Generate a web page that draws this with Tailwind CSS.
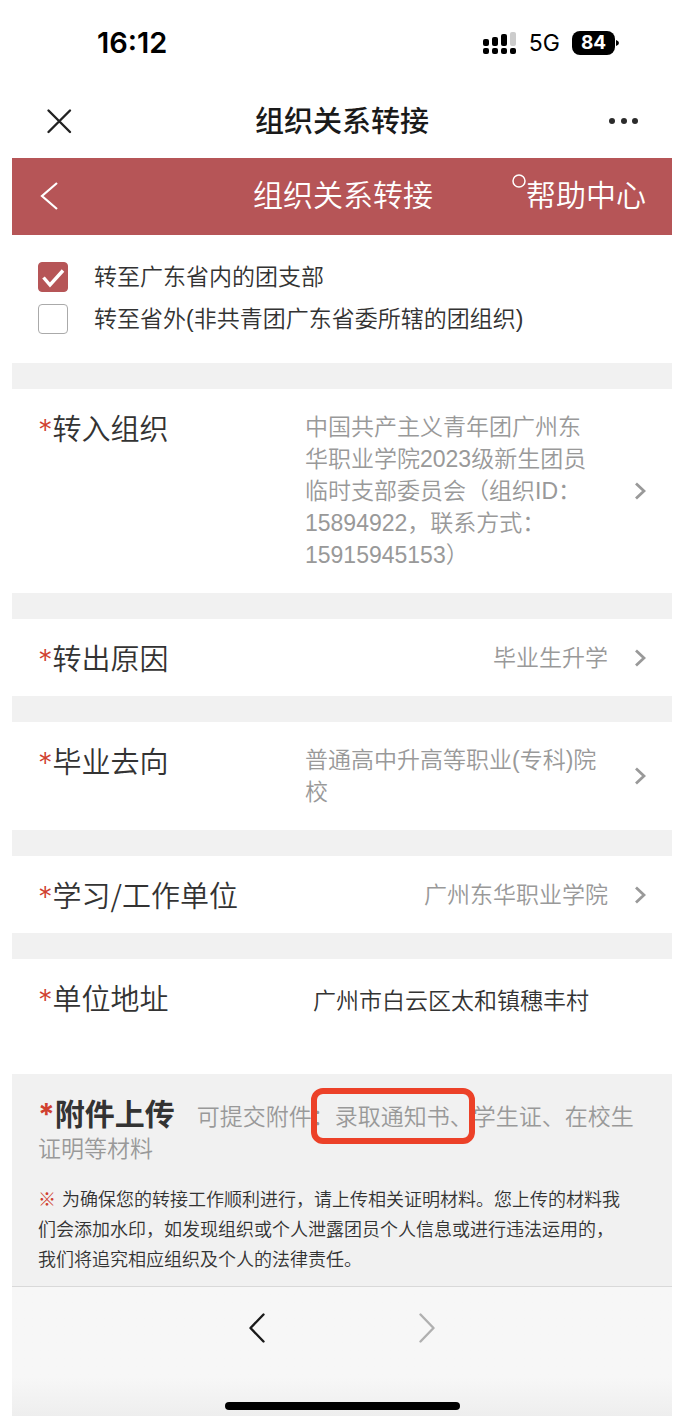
<!DOCTYPE html>
<html lang="zh-CN">
<head>
  <meta charset="UTF-8">
  <meta name="viewport" content="width=device-width, initial-scale=1.0">
  <title>组织关系转接</title>
  <script src="https://cdn.jsdelivr.net/npm/@tailwindcss/browser@4"></script>
</head>
<body class="bg-white text-[#333] font-['Liberation_Sans','Noto_Sans_CJK_SC',sans-serif]">
  <div class="min-h-screen flex flex-col pl-3 pr-0.5">

    <!-- status bar -->
    <div class="h-[86px] flex items-center justify-between pl-[85px] pr-[53px] text-black font-[Inter,sans-serif]">
      <span class="text-[29px] font-semibold">16:12</span>
      <div class="flex items-center">
        <svg class="w-[34px] h-6 mr-3" viewBox="0 0 34 24">
          <rect x="0" y="8" width="6" height="7" rx="2"/>
          <rect x="9" y="6" width="6" height="9" rx="2"/>
          <rect x="18" y="3" width="6" height="12" rx="2"/>
          <rect x="27" y="1" width="6" height="14" rx="2" fill="#ccc"/>
          <rect x="0" y="17" width="6" height="6" rx="2"/>
          <rect x="9" y="17" width="6" height="6" rx="2"/>
          <rect x="18" y="17" width="6" height="6" rx="2"/>
          <rect x="27" y="17" width="6" height="6" rx="2"/>
        </svg>
        <span class="text-[23px] mr-3">5G</span>
        <span class="w-[43px] h-6 rounded-lg bg-black text-white text-[19px] leading-6 font-bold text-center">84</span>
        <svg class="w-1 h-2" viewBox="0 0 4 8"><path d="M1 1 Q4 2 4 4 Q4 6 1 7Z"/></svg>
      </div>
    </div>

    <!-- browser title -->
    <header class="h-[72px] grid grid-cols-3 items-center px-[34px] pb-0.5">
      <button type="button" aria-label="关闭" class="justify-self-start">
        <svg class="w-[26px] h-[26px]" viewBox="0 0 26 26" fill="none" stroke="#222" stroke-width="2.4" stroke-linecap="round"><path d="M2.5 2.5 24 24M24 2.5 2.5 24"/></svg>
      </button>
      <h1 class="pt-1 text-[29px] font-medium text-[#1a1a1a] text-center whitespace-nowrap">组织关系转接</h1>
      <button type="button" aria-label="更多" class="justify-self-end">
        <svg class="w-[30px] h-2" viewBox="0 0 30 8" fill="#2b2b2b"><circle cx="4" cy="4" r="3"/><circle cx="16" cy="4" r="3"/><circle cx="27" cy="4" r="3"/></svg>
      </button>
    </header>

    <nav class="h-[77px] grid grid-cols-3 items-center pl-7 pr-[26px] pb-[3px] bg-[#b65557] text-white text-[30px] font-[350]">
      <button type="button" aria-label="返回" class="justify-self-start pt-0.5">
        <svg class="w-[18px] h-7" viewBox="0 0 18 28" fill="none" stroke="#fff" stroke-width="2.2"><path d="M17 1 2 14 17 27"/></svg>
      </button>
      <h2 class="text-center whitespace-nowrap">组织关系转接</h2>
      <a href="#" class="justify-self-end flex items-center whitespace-nowrap">
        <svg class="w-3.5 h-3.5 mb-7" viewBox="0 0 14 14" fill="none" stroke="#fff" stroke-width="1.5"><circle cx="7" cy="7" r="6"/></svg>帮助中心
      </a>
    </nav>

    <form class="flex flex-col text-[23px] leading-8 font-[350]">
      <div class="flex flex-col gap-3 pt-[27px] pb-[29px] px-[26px]">
        <label class="flex items-center h-[30px]">
          <span class="relative flex mr-[26px]">
            <input type="checkbox" checked class="peer appearance-none w-[30px] h-[30px] rounded border border-[#aaa] checked:bg-[#b65557] checked:border-[#b65557]">
            <svg class="absolute inset-0 w-[30px] h-[30px] hidden peer-checked:block" viewBox="0 0 30 30" fill="none" stroke="#fff" stroke-width="3.4"><path d="M5.5 15.5 12 23 25 8.5"/></svg>
          </span>
          转至广东省内的团支部
        </label>
        <label class="flex items-center h-[30px]">
          <span class="relative flex mr-[26px]">
            <input type="checkbox" class="peer appearance-none w-[30px] h-[30px] rounded border border-[#aaa] checked:bg-[#b65557] checked:border-[#b65557]">
            <svg class="absolute inset-0 w-[30px] h-[30px] hidden peer-checked:block" viewBox="0 0 30 30" fill="none" stroke="#fff" stroke-width="3.4"><path d="M5.5 15.5 12 23 25 8.5"/></svg>
          </span>
          转至省外(非共青团广东省委所辖的团组织)
        </label>
      </div>

      <div class="flex border-t-[26px] border-[#f1f1f1] py-[22px] px-[26px]">
        <label for="org" class="w-[267px] text-[29px] font-['Noto_Sans_CJK_SC',sans-serif]"><span class="text-[#d0402f] leading-none font-[Inter,sans-serif]">*</span>转入组织</label>
        <button id="org" type="button" class="flex-1 flex items-center justify-between text-left text-[#999]">
          <span>中国共产主义青年团广州东<br>华职业学院2023级新生团员<br>临时支部委员会（组织ID：<br>15894922，联系方式：<br>15915945153）</span>
          <svg class="w-3 h-[18px] shrink-0" viewBox="0 0 12 18" fill="none" stroke="#999" stroke-width="2.8"><path d="M2 1.5 10 9 2 16.5"/></svg>
        </button>
      </div>

      <div class="flex border-t-[26px] border-[#f1f1f1] py-[22px] px-[26px]">
        <label for="reason" class="w-[267px] text-[29px] font-['Noto_Sans_CJK_SC',sans-serif]"><span class="text-[#d0402f] leading-none font-[Inter,sans-serif]">*</span>转出原因</label>
        <button id="reason" type="button" class="flex-1 flex items-center justify-end text-[#999]">
          <span class="mr-[26px]">毕业生升学</span>
          <svg class="w-3 h-[18px] shrink-0" viewBox="0 0 12 18" fill="none" stroke="#999" stroke-width="2.8"><path d="M2 1.5 10 9 2 16.5"/></svg>
        </button>
      </div>

      <div class="flex border-t-[26px] border-[#f1f1f1] py-[22px] px-[26px]">
        <label for="direction" class="w-[267px] text-[29px] font-['Noto_Sans_CJK_SC',sans-serif]"><span class="text-[#d0402f] leading-none font-[Inter,sans-serif]">*</span>毕业去向</label>
        <button id="direction" type="button" class="flex-1 flex items-center justify-between text-left text-[#999]">
          <span class="mr-[26px]">普通高中升高等职业(专科)院校</span>
          <svg class="w-3 h-[18px] shrink-0" viewBox="0 0 12 18" fill="none" stroke="#999" stroke-width="2.8"><path d="M2 1.5 10 9 2 16.5"/></svg>
        </button>
      </div>

      <div class="flex border-t-[26px] border-[#f1f1f1] py-[22px] px-[26px]">
        <label for="unit" class="w-[267px] text-[29px] font-['Noto_Sans_CJK_SC',sans-serif]"><span class="text-[#d0402f] leading-none font-[Inter,sans-serif]">*</span>学习/工作单位</label>
        <button id="unit" type="button" class="flex-1 flex items-center justify-end text-[#999]">
          <span class="mr-[26px]">广州东华职业学院</span>
          <svg class="w-3 h-[18px] shrink-0" viewBox="0 0 12 18" fill="none" stroke="#999" stroke-width="2.8"><path d="M2 1.5 10 9 2 16.5"/></svg>
        </button>
      </div>

      <div class="flex border-t-[26px] border-[#f1f1f1] pt-[22px] pb-[57px] px-[26px]">
        <label for="address" class="w-[267px] text-[29px] font-['Noto_Sans_CJK_SC',sans-serif]"><span class="text-[#d0402f] leading-none font-[Inter,sans-serif]">*</span>单位地址</label>
        <input id="address" type="text" value="广州市白云区太和镇穗丰村" class="flex-1 min-w-0 h-9 pl-2 outline-none">
      </div>

      <section class="bg-[#f1f1f1] pt-[22px] pb-[11px] px-[26px]">
        <p class="text-[#999]">
          <strong class="text-[30px] font-bold text-[#333] mr-[22px] font-['Noto_Sans_CJK_SC',sans-serif]"><span class="text-[#d0402f] leading-none font-[Inter,sans-serif]">*</span>附件上传</strong>可提交附件：<span class="relative">录取通知书、<span class="absolute -left-6 -top-4 w-[164px] h-14 border-6 border-[#ec4128] rounded-xl"></span></span>学生证、在校生证明等材料
        </p>
        <p class="mt-5 pr-4 text-[18px] leading-[30px]"><span class="text-[#d0402f] mr-1.5">※</span>为确保您的转接工作顺利进行，请上传相关证明材料。您上传的材料我们会添加水印，如发现组织或个人泄露团员个人信息或进行违法运用的，我们将追究相应组织及个人的法律责任。</p>
      </section>
    </form>

    <!-- bottom toolbar -->
    <footer class="flex-1 flex flex-col items-center justify-between border-t border-[#d9d9d9] bg-linear-to-b from-[#f7f7f7] from-70% to-[#eee] pt-[26px] pb-1.5">
      <div class="flex gap-[154px]">
        <button type="button" aria-label="后退">
          <svg class="w-4 h-[30px]" viewBox="0 0 16 30" fill="none" stroke="#1a1a1a" stroke-width="2.4" stroke-linecap="round" stroke-linejoin="round"><path d="M14.5 1.5 1.5 15 14.5 28.5"/></svg>
        </button>
        <button type="button" aria-label="前进">
          <svg class="w-4 h-[30px]" viewBox="0 0 16 30" fill="none" stroke="#b0b0b0" stroke-width="2.4" stroke-linecap="round" stroke-linejoin="round"><path d="M1.5 1.5 14.5 15 1.5 28.5"/></svg>
        </button>
      </div>
      <div class="w-[235px] h-2 rounded-full bg-black"></div>
    </footer>
  </div>
</body>
</html>
